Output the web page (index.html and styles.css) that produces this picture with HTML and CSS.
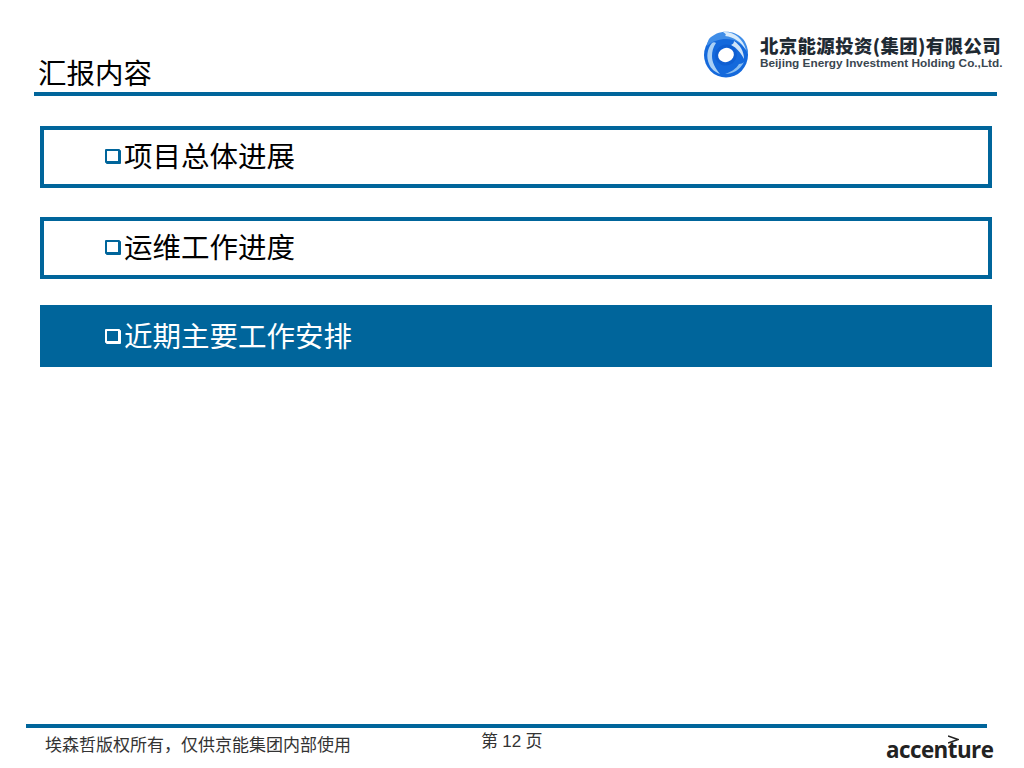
FILE: index.html
```html
<!DOCTYPE html>
<html lang="zh">
<head>
<meta charset="utf-8">
<title>汇报内容</title>
<link rel="stylesheet" href="styles.css">
</head>
<body>
<div class="slide">
  <header class="head">
    <h1 class="title">汇报内容</h1>
    <div class="logo">
      <svg class="swirl" width="46" height="48" viewBox="0 0 46 48">
        <ellipse cx="23" cy="25" rx="22" ry="22.5" fill="#1469dc"/>
        <path d="M6 9C14 0 30 -1 39 8C43 12 45 18 45 24C41 15 33 9 23 9C16 9 10 11 4 16C4 13 5 11 6 9Z" fill="#3f8de8"/>
        <path d="M20 2C30 1 40 8 43 20C38 12 31 7 22 6C24 5 22 3 20 2Z" fill="#d8ebfb"/>
        <path d="M31 11C37 15 41 21 41 29C38 23 34 18 28 15C30 14 31 13 31 11Z" fill="#cfe4f8"/>
        <path d="M9 13C4 19 3 27 6 34C8 39 12 42 17 44C12 38 9 32 9 26C9 22 10 17 13 13C12 12 10 12 9 13Z" fill="#a9d0f5"/>
        <path d="M41 32C37 40 30 44 22 44C28 42 33 39 36 34C38 34 40 33 41 32Z" fill="#8cbff1"/>
        <ellipse cx="23" cy="25" rx="11" ry="10.5" fill="#0f5fd2" transform="rotate(-20 23 25)"/>
        <ellipse cx="23" cy="25" rx="8" ry="7" fill="#fff" transform="rotate(-20 23 25)"/>
      </svg>
      <div class="logo-text">
        <div class="logo-cn">北京能源投资(集团)有限公司</div>
        <div class="logo-en">Beijing Energy Investment Holding Co.,Ltd.</div>
      </div>
    </div>
  </header>
  <main class="agenda">
    <div class="item"><span class="box"></span>项目总体进展</div>
    <div class="item"><span class="box"></span>运维工作进度</div>
    <div class="item active"><span class="box"></span>近期主要工作安排</div>
  </main>
  <footer class="foot">
    <div class="foot-row">
      <div class="copy">埃森哲版权所有，仅供京能集团内部使用</div>
      <div class="page">第 <span class="num">12</span> 页</div>
      <div class="brand">
        <svg class="gt" width="11" height="9" viewBox="0 0 11 9"><path d="M0 1L10 4.5L0 8" fill="none" stroke="#222" stroke-width="1.6"/></svg>
        accenture
      </div>
    </div>
  </footer>
</div>
</body>
</html>
```
FILE: styles.css
```css
* { box-sizing: border-box; }
html, body { margin: 0; padding: 0; }
body {
  background: #fff;
  font-family: "Liberation Serif", "Noto Sans CJK SC", serif;
  color: #000;
}
.slide {
  width: 1024px;
  height: 768px;
  overflow: hidden;
  display: flex;
  flex-direction: column;
}
.head {
  height: 96px;
  margin: 0 27px 0 34px;
  border-bottom: 4px solid #00659b;
  display: flex;
  justify-content: space-between;
  align-items: flex-start;
  overflow: visible;
}
.title {
  margin: 56px 0 0 4px;
  font-size: 28.5px;
  font-weight: 400;
  line-height: 38px;
}
.logo {
  display: flex;
  align-items: flex-start;
  gap: 11px;
  margin: 30px -5px 0 0;
  width: 299px;
}
.logo-text { color: #1f2a33; white-space: nowrap; margin-top: 3px; }
.logo-cn {
  font-family: "Noto Sans CJK SC", sans-serif;
  font-weight: 900;
  font-size: 18.4px;
  line-height: 24px;
  letter-spacing: 0.4px;
}
.logo-en {
  font-family: "Liberation Sans", sans-serif;
  font-weight: 700;
  font-size: 11.8px;
  line-height: 13px;
  color: #3a4650;
}
.swirl { flex: none; filter: blur(0.4px); }
.agenda {
  margin: 30px 32px 0 40px;
  display: flex;
  flex-direction: column;
}
.item {
  height: 62px;
  border: 4px solid #00659b;
  display: flex;
  align-items: center;
  padding: 0 0 6px 61px;
  font-size: 28.5px;
  margin-bottom: 29px;
}
.item + .item + .item { margin-top: -3px; }
.active {
  padding-bottom: 4px;
  background: #00659b;
  color: #fff;
}
.box {
  width: 15px;
  height: 14px;
  margin: 3px 4px 0 0;
  flex: none;
  background: #fff;
  border: 2px solid #00659b;
  border-radius: 1px;
  box-shadow: 1px 1px 0 #00659b;
}
.active .box {
  background: #00659b;
  border-color: #fff;
  box-shadow: 1px 1px 0 #fff;
}
.foot {
  margin-top: auto;
  height: 44px;
  padding: 0 37px 0 26px;
}
.foot-row {
  position: relative;
  height: 44px;
  border-top: 4px solid #00659b;
  display: flex;
}
.copy {
  margin: 5px 0 0 19px;
  font-size: 17px;
  line-height: 26px;
  color: #333;
  width: 436px;
}
.page {
  margin-top: 1px;
  font-size: 17px;
  line-height: 26px;
  color: #333;
  white-space: nowrap;
}
.num { font-family: "Liberation Sans", sans-serif; }
.brand {
  position: absolute;
  left: 860px;
  top: 6px;
  font-family: "Open Sans", sans-serif;
  font-weight: 700;
  font-size: 22.4px;
  letter-spacing: -0.55px;
  line-height: 32px;
  color: #222;
  white-space: nowrap;
}
.gt {
  position: absolute;
  left: 62px;
  top: 1px;
}
```
